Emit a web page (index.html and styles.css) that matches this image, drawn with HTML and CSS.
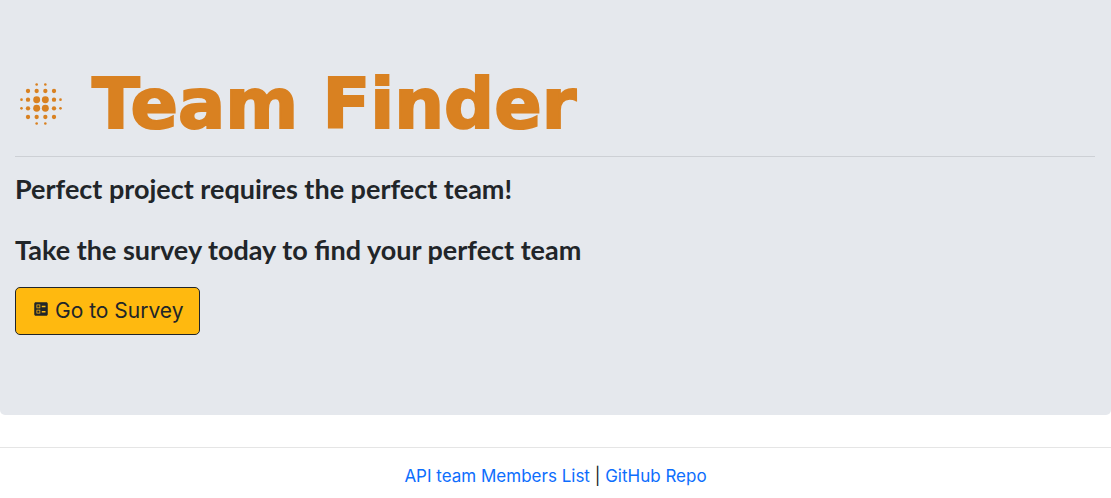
FILE: index.html
```html
<!DOCTYPE html>
<html lang="en">
<head>
<meta charset="utf-8">
<meta name="viewport" content="width=device-width, initial-scale=1">
<title>Team Finder</title>
<link rel="stylesheet" href="styles.css">
</head>
<body>
<main class="hero">
  <h1 class="title">
    <svg class="logo" viewBox="0 0 24 24" aria-hidden="true">
      <g>
        <circle cx="10" cy="10" r="1.600"/><circle cx="14" cy="10" r="1.600"/><circle cx="10" cy="14" r="1.600"/><circle cx="14" cy="14" r="1.600"/>
        <circle cx="6" cy="6" r="1"/><circle cx="10" cy="6" r="1"/><circle cx="14" cy="6" r="1"/><circle cx="18" cy="6" r="1"/>
        <circle cx="6" cy="10" r="1"/><circle cx="18" cy="10" r="1"/><circle cx="6" cy="14" r="1"/><circle cx="18" cy="14" r="1"/>
        <circle cx="6" cy="18" r="1"/><circle cx="10" cy="18" r="1"/><circle cx="14" cy="18" r="1"/><circle cx="18" cy="18" r="1"/>
        <circle cx="10" cy="3" r=".6"/><circle cx="14" cy="3" r=".6"/><circle cx="10" cy="21" r=".6"/><circle cx="14" cy="21" r=".6"/>
        <circle cx="3" cy="10" r=".6"/><circle cx="3" cy="14" r=".6"/><circle cx="21" cy="10" r=".6"/><circle cx="21" cy="14" r=".6"/>
      </g>
    </svg>
    <span class="name">Team Finder</span>
  </h1>
  <hr class="rule">
  <p class="lead">Perfect project requires the perfect team!</p>
  <p class="lead">Take the survey today to find your perfect team</p>
  <button class="survey" type="button">
    <svg class="ballot" viewBox="0 0 24 24" aria-hidden="true"><path fill-rule="evenodd" d="M13 9.500h5v-2h-5v2zm0 7h5v-2h-5v2zM19 21H5c-1.100 0-2-.9-2-2V5c0-1.100.9-2 2-2h14c1.100 0 2 .9 2 2v14c0 1.100-.9 2-2 2zM6 11h5V6H6v5zm1-4h3v3H7V7zM6 18h5v-5H6v5zm1-4h3v3H7v-3z"/></svg>
    <span>Go to Survey</span>
  </button>
</main>
<footer class="footer">
  <a href="#members">API team Members List</a> | <a href="#repo">GitHub Repo</a>
</footer>
</body>
</html>
```
FILE: styles.css
```css
* { box-sizing: border-box; }
body {
  margin: 0;
  background: #fff;
  color: #212529;
  font: 17px/24px Inter, "Liberation Sans", sans-serif;
}
.hero {
  padding: 66px 16px 80px 15px;
  background: #e5e8ed;
  border-radius: 0 0 5px 5px;
}
.title {
  display: flex;
  align-items: center;
  gap: 25px;
  margin: 0;
  color: #d98121;
  font: 700 70px/76px "DejaVu Sans", "Liberation Sans", sans-serif;
}
.name { -webkit-text-stroke: 2px currentColor; }
.logo { width: 52px; height: 52px; fill: currentColor; }
.rule {
  margin: 14px 0 15px;
  border: 0;
  border-top: 1px solid #cdd0d5;
}
.lead {
  margin: 0 0 28px;
  font-family: Lato, "Liberation Sans", sans-serif;
  font-size: 27px;
  line-height: 33px;
  font-weight: 700;
}
.survey {
  display: flex;
  align-items: baseline;
  gap: 5px;
  margin-top: -7px;
  padding: 8px 16px;
  border: 1px solid #212529;
  border-radius: 5px;
  background: #ffb90f;
  color: #212529;
  font: 21px/30px Inter, "Liberation Sans", sans-serif;
}
.ballot { width: 18px; height: 18px; fill: currentColor; }
.footer {
  margin-top: 32px;
  padding: 16px;
  border-top: 1px solid #e5e5e5;
  text-align: center;
}
.footer a { color: #0d6efd; text-decoration: none; }
```
